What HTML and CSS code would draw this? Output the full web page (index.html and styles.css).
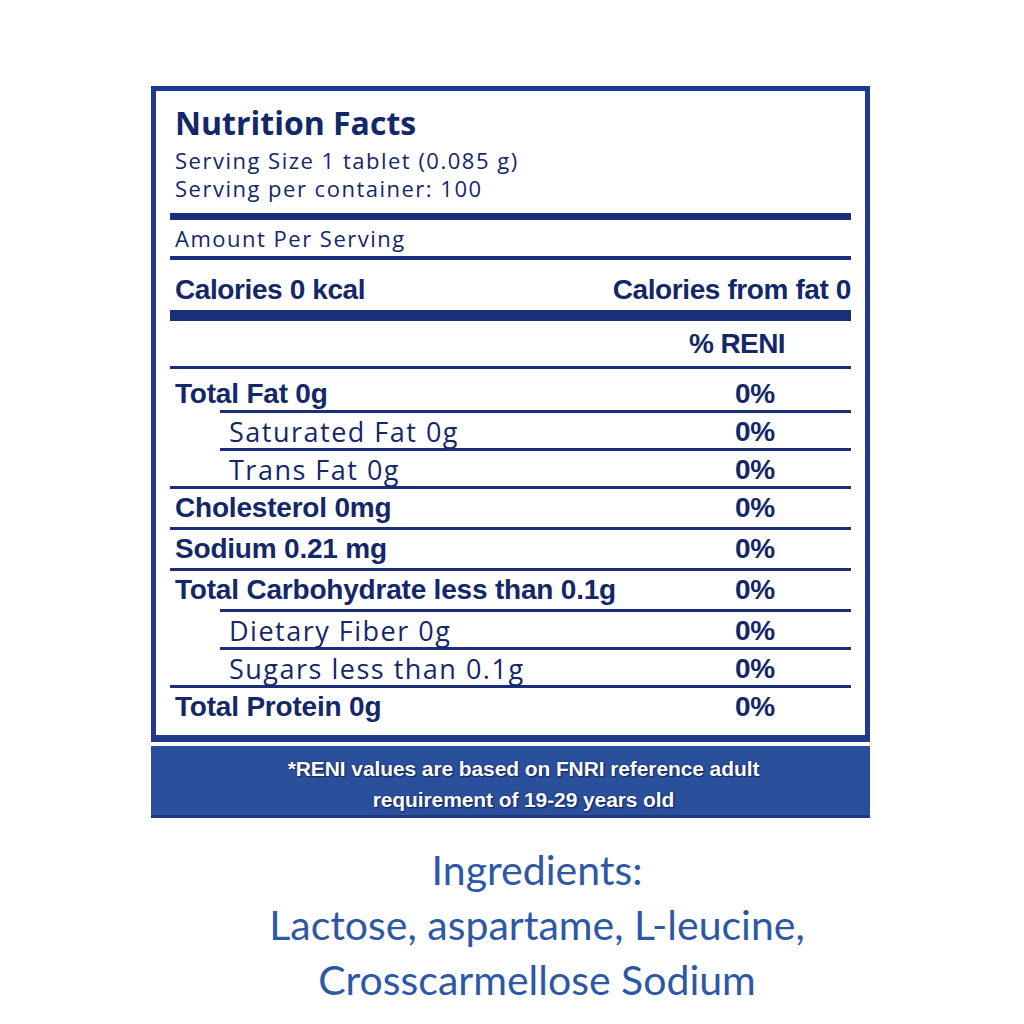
FILE: index.html
```html
<!DOCTYPE html>
<html lang="en">
<head>
<meta charset="utf-8">
<title>Nutrition Facts</title>
<link rel="stylesheet" href="styles.css">
</head>
<body>
<main class="page">
  <section class="label">
    <div class="box">
      <h1 class="title">Nutrition Facts</h1>
      <p class="serving">Serving Size 1 tablet (0.085 g)</p>
      <p class="serving">Serving per container: 100</p>
      <div class="rule rule-thick"></div>
      <p class="amount">Amount Per Serving</p>
      <div class="rule rule-thin"></div>
      <div class="cal-row">
        <span>Calories 0 kcal</span>
        <span>Calories from fat 0</span>
      </div>
      <div class="rule rule-heavy"></div>
      <div class="reni-head">% RENI</div>
      <div class="rows">
        <div class="row main first"><span class="name">Total Fat 0g</span><span class="pct">0%</span></div>
        <div class="row sub"><span class="name">Saturated Fat 0g</span><span class="pct">0%</span></div>
        <div class="row sub"><span class="name">Trans Fat 0g</span><span class="pct">0%</span></div>
        <div class="row main"><span class="name">Cholesterol 0mg</span><span class="pct">0%</span></div>
        <div class="row main"><span class="name">Sodium 0.21 mg</span><span class="pct">0%</span></div>
        <div class="row main"><span class="name">Total Carbohydrate less than 0.1g</span><span class="pct">0%</span></div>
        <div class="row sub"><span class="name">Dietary Fiber 0g</span><span class="pct">0%</span></div>
        <div class="row sub"><span class="name">Sugars less than 0.1g</span><span class="pct">0%</span></div>
        <div class="row main last"><span class="name">Total Protein 0g</span><span class="pct">0%</span></div>
      </div>
    </div>
    <div class="note">
      <p>*RENI values are based on FNRI reference adult</p>
      <p>requirement of 19-29 years old</p>
    </div>
  </section>
  <section class="ingredients">
    <p>Ingredients:</p>
    <p>Lactose, aspartame, L-leucine,</p>
    <p>Crosscarmellose Sodium</p>
  </section>
</main>
</body>
</html>
```

FILE: styles.css
```css
* {
  box-sizing: border-box;
}

html, body {
  margin: 0;
  padding: 0;
  background: #ffffff;
}

.page {
  width: 1024px;
  height: 1024px;
  padding-top: 86px;
  overflow: hidden;
}

.label {
  width: 719px;
  margin-left: 151px;
}

.box {
  border: 5px solid #1f3a8a;
  border-bottom-width: 7px;
  padding: 14px 14px 0 14px;
  color: #142768;
}

.title {
  margin: 0 0 0 5px;
  font-family: "Open Sans", sans-serif;
  font-weight: 700;
  font-size: 32px;
  line-height: 36px;
}

.serving {
  margin: 0 0 0 5px;
  font-family: "Open Sans", sans-serif;
  font-size: 22px;
  letter-spacing: 1.5px;
  line-height: 28px;
}

.serving:first-of-type {
  margin-top: 5px;
}

.rule {
  background: #1a2f78;
}

.rule-thick {
  height: 7px;
  margin-top: 11px;
}

.rule-thin {
  height: 4px;
  margin-top: 4px;
}

.rule-heavy {
  height: 11px;
  margin-top: 4px;
}

.amount {
  margin: 4px 0 0 5px;
  font-family: "Open Sans", sans-serif;
  font-size: 22px;
  letter-spacing: 1.5px;
  line-height: 28px;
}

.cal-row {
  display: flex;
  justify-content: space-between;
  margin-top: 14px;
  padding-left: 5px;
  font-family: "Liberation Sans", Arial, sans-serif;
  font-weight: 700;
  font-size: 28px;
  letter-spacing: -0.4px;
  line-height: 32px;
}

.reni-head {
  margin-top: 7px;
  padding-right: 66px;
  text-align: right;
  font-family: "Liberation Sans", Arial, sans-serif;
  font-weight: 700;
  font-size: 28px;
  letter-spacing: -0.6px;
  line-height: 32px;
}

.rows {
  margin-top: 6px;
}

.row {
  display: flex;
  border-top: 3px solid #1a2f78;
  line-height: 32px;
}

.row .name {
  flex: 1;
}

.row .pct {
  width: 116px;
  font-family: "Liberation Sans", Arial, sans-serif;
  font-weight: 700;
  font-size: 28px;
}

.row.main {
  padding: 3px 0 3px 5px;
  font-family: "Liberation Sans", Arial, sans-serif;
  font-weight: 700;
  font-size: 28px;
  letter-spacing: -0.2px;
}

.row.main.first {
  padding-top: 9px;
  padding-bottom: 0;
}

.row.main.last {
  padding-bottom: 12px;
}

.row.sub {
  margin-left: 50px;
  padding: 3px 0 0 9px;
  font-family: "Open Sans", sans-serif;
  font-size: 27px;
  letter-spacing: 1.5px;
}

.row.sub .pct {
  letter-spacing: -0.2px;
}

.note {
  margin-top: 4px;
  padding: 7px 0 0 26px;
  background: #2a509c;
  border-bottom: 3px solid #1d3a7e;
  height: 72px;
  text-align: center;
  color: #ffffff;
  font-family: "Liberation Sans", Arial, sans-serif;
  font-weight: 700;
  font-size: 21px;
  letter-spacing: -0.1px;
  line-height: 31px;
  text-shadow: 0 0 2px #10235e, 1px 1px 1px #10235e;
}

.note p {
  margin: 0;
}

.ingredients {
  margin-top: 24px;
  padding-left: 50px;
  text-align: center;
  color: #2d58a3;
  font-family: Lato, "Open Sans", sans-serif;
  font-size: 41px;
  line-height: 55px;
}

.ingredients p {
  margin: 0;
}
```
